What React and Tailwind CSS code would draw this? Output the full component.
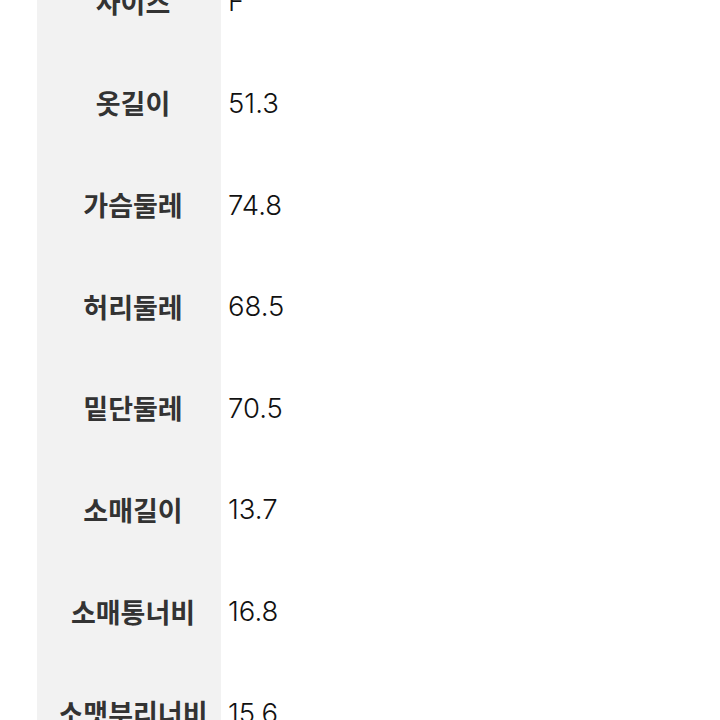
const rows = [
  ["사이즈", "F"],
  ["옷길이", "51.3"],
  ["가슴둘레", "74.8"],
  ["허리둘레", "68.5"],
  ["밑단둘레", "70.5"],
  ["소매길이", "13.7"],
  ["소매통너비", "16.8"],
  ["소맷부리너비", "15.6"],
];

export default function App() {
  return (
    <div className="w-[720px] h-[720px] overflow-hidden bg-white">
      <div className="-mt-[49px] pl-[37px]">
        {rows.map(([k, v]) => (
          <div key={k} className="flex h-[101.67px]">
            <div className="w-[184px] bg-[#f2f2f2] flex items-center justify-center pl-[8px]">
              <span
                className="text-[27px] font-bold text-[#333333] whitespace-nowrap"
                style={{ fontFamily: '"Noto Sans CJK KR", sans-serif' }}
              >
                {k}
              </span>
            </div>
            <div className="flex items-center pl-[7px]">
              <span
                className="text-[27.5px] font-light text-[#111111]"
                style={{ fontFamily: 'Inter, "Noto Sans CJK KR", sans-serif' }}
              >
                {v}
              </span>
            </div>
          </div>
        ))}
      </div>
    </div>
  );
}
